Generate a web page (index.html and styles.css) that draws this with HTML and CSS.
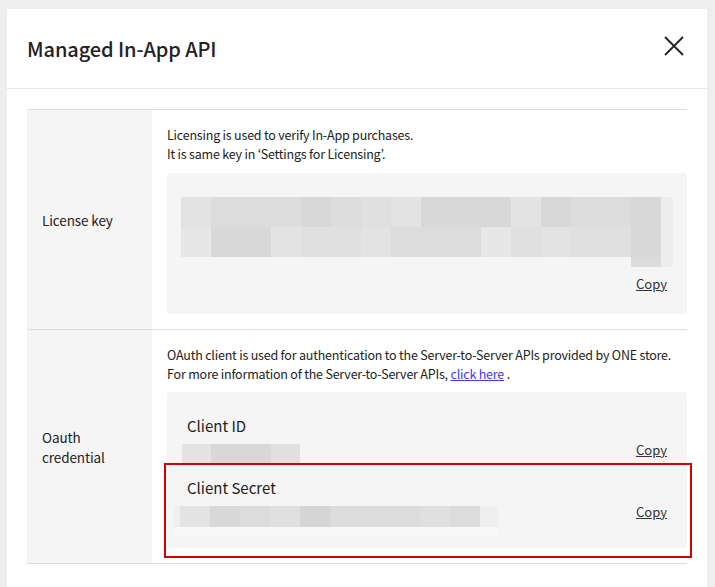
FILE: index.html
```html
<!DOCTYPE html>
<html lang="en">
<head>
<meta charset="utf-8">
<title>Managed In-App API</title>
<link rel="stylesheet" href="styles.css">
</head>
<body>
<div class="modal">
  <header class="modal-header">
    <h1 class="modal-title">Managed In-App API</h1>
    <button class="close" type="button" aria-label="Close">
      <svg width="20" height="20" viewBox="0 0 20 20"><path d="M1 1L19 19M19 1L1 19" stroke="#222" stroke-width="1.8" fill="none"/></svg>
    </button>
  </header>
  <div class="modal-body">
    <div class="info-table">
      <div class="row row-license">
        <div class="label">License key</div>
        <div class="content">
          <p class="desc">Licensing is used to verify In-App purchases.<br>It is same key in ‘Settings for Licensing’.</p>
          <div class="key-box license-box">
            <div class="pixels pixels-license">
              <span class="a"></span><span class="b"></span><span class="b"></span><span class="b"></span><span class="c"></span><span class="b"></span><span class="d"></span><span class="a"></span><span class="c"></span><span class="c"></span><span class="c"></span><span class="a"></span><span class="c"></span><span class="b"></span><span class="b"></span><span class="c"></span><span class="f"></span>
              <span class="e"></span><span class="c"></span><span class="c"></span><span class="a"></span><span class="d"></span><span class="d"></span><span class="a"></span><span class="b"></span><span class="b"></span><span class="b"></span><span class="e"></span><span class="d"></span><span class="a"></span><span class="d"></span><span class="d"></span><span class="c"></span><span class="f"></span>
              <span></span><span></span><span></span><span></span><span></span><span></span><span></span><span></span><span></span><span></span><span></span><span></span><span></span><span></span><span></span><span class="b"></span><span class="f"></span>
            </div>
            <div class="copy-line"><a class="copy" href="#">Copy</a></div>
          </div>
        </div>
      </div>
      <div class="row row-oauth">
        <div class="label">Oauth credential</div>
        <div class="content">
          <p class="desc">OAuth client is used for authentication to the Server-to-Server APIs provided by ONE store.<br>For more information of the Server-to-Server APIs, <a class="link" href="#">click here</a> .</p>
          <div class="key-box client-box">
            <div class="client client-id">
              <div class="client-label">Client ID</div>
              <div class="client-value">
                <div class="pixels pixels-id">
                  <span class="a"></span><span class="c"></span><span class="c"></span><span class="d"></span>
                </div>
                <a class="copy" href="#">Copy</a>
              </div>
            </div>
            <div class="client client-secret">
              <div class="client-label">Client Secret</div>
              <div class="client-value">
                <div class="secret-wrap">
                  <div class="pixels pixels-secret">
                    <span class="a"></span><span class="c"></span><span class="b"></span><span class="d"></span><span class="g"></span><span class="b"></span><span class="b"></span><span class="b"></span><span class="d"></span><span class="b"></span>
                  </div>
                </div>
                <a class="copy" href="#">Copy</a>
              </div>
            </div>
          </div>
        </div>
      </div>
    </div>
  </div>
</div>
</body>
</html>
```

FILE: styles.css
```css
* { box-sizing: border-box; }

html, body {
  margin: 0;
  padding: 0;
}

body {
  background: #eeeeee;
  font-family: "Noto Sans CJK KR", "Noto Sans", sans-serif;
  color: #222;
  overflow: hidden;
}

.modal {
  margin: 9px 0 0 7px;
  width: 700px;
  background: #fff;
  min-height: 600px;
}

.modal-header {
  height: 80px;
  border-bottom: 1px solid #e6e6e6;
  display: flex;
  align-items: center;
  justify-content: space-between;
  padding: 0 23px 0 20px;
}

.modal-title {
  margin: 0;
  font-size: 20px;
  font-weight: 500;
  color: #222;
  line-height: 28px;
  letter-spacing: -0.1px;
}

.close {
  border: 0;
  background: transparent;
  padding: 0;
  width: 20px;
  height: 20px;
  margin-top: -5px;
  display: block;
}

.close svg { display: block; }

.modal-body {
  padding: 20px 20px 40px 20px;
}

.info-table {
  border-top: 1px solid #dddddd;
}

.row {
  display: grid;
  grid-template-columns: 125px minmax(0, 1fr);
  border-bottom: 1px solid #dddddd;
}

.label {
  background: #f5f5f5;
  display: flex;
  align-items: center;
  padding: 0 15px;
  font-size: 13.5px;
  line-height: 20px;
  letter-spacing: -0.1px;
  color: #222;
}

.content {
  padding: 15px 0 15px 15px;
}

.desc {
  margin: 0;
  font-size: 12.5px;
  line-height: 19px;
  color: #222;
  letter-spacing: -0.2px;
  white-space: nowrap;
}

.link {
  color: #3c3cf5;
  text-decoration: underline;
}

.key-box {
  margin-top: 10px;
  background: #f5f5f5;
  border-radius: 3px;
}

.license-box {
  padding: 24px 14px 20px 14px;
}

.pixels {
  display: grid;
}

.pixels-license {
  grid-template-columns: repeat(16, 30px) 12px;
  grid-template-rows: 30px 30px 10px;
}

.pixels span { display: block; }
.pixels .a { background: #e3e3e3; }
.pixels .b { background: #dcdcdc; }
.pixels .c { background: #d8d8d8; }
.pixels .d { background: #e0e0e0; }
.pixels .e { background: #e7e7e7; }
.pixels .f { background: #ededed; }
.pixels .g { background: #d5d5d5; }

.copy-line {
  margin-top: 5px;
  padding-right: 6px;
  text-align: right;
  line-height: 20px;
}

.copy {
  font-size: 13px;
  line-height: 20px;
  color: #333;
  text-decoration: underline;
}

.client-box {
  margin-top: 9px;
  padding: 23px 20px 0 0;
}

.client {
  position: relative;
}

.client-label {
  font-size: 15px;
  line-height: 22px;
  padding-left: 20px;
  color: #222;
}

.client-value {
  display: flex;
  justify-content: space-between;
  align-items: flex-start;
  margin-top: 7px;
}

.client-value .copy {
  margin-top: -4px;
}

.client-id .client-value {
  padding-left: 15px;
}

.pixels-id {
  grid-template-columns: 29px 30px 30px 29px;
  grid-template-rows: 19px;
}

.client-secret {
  padding-top: 14px;
  padding-bottom: 12px;
}

.client-secret .client-value {
  padding-left: 7px;
}

.secret-wrap {
  width: 324px;
  height: 30px;
  background: linear-gradient(to bottom, transparent 21px, #f9f9f9 21px), #efefef;
  padding-left: 6px;
}

.pixels-secret {
  grid-template-columns: repeat(10, 30px);
  grid-template-rows: 21px;
}

.client-secret::after {
  content: "";
  position: absolute;
  top: 0;
  left: -3px;
  right: -25px;
  bottom: -10px;
  border: 2px solid #d40000;
  pointer-events: none;
}
```
